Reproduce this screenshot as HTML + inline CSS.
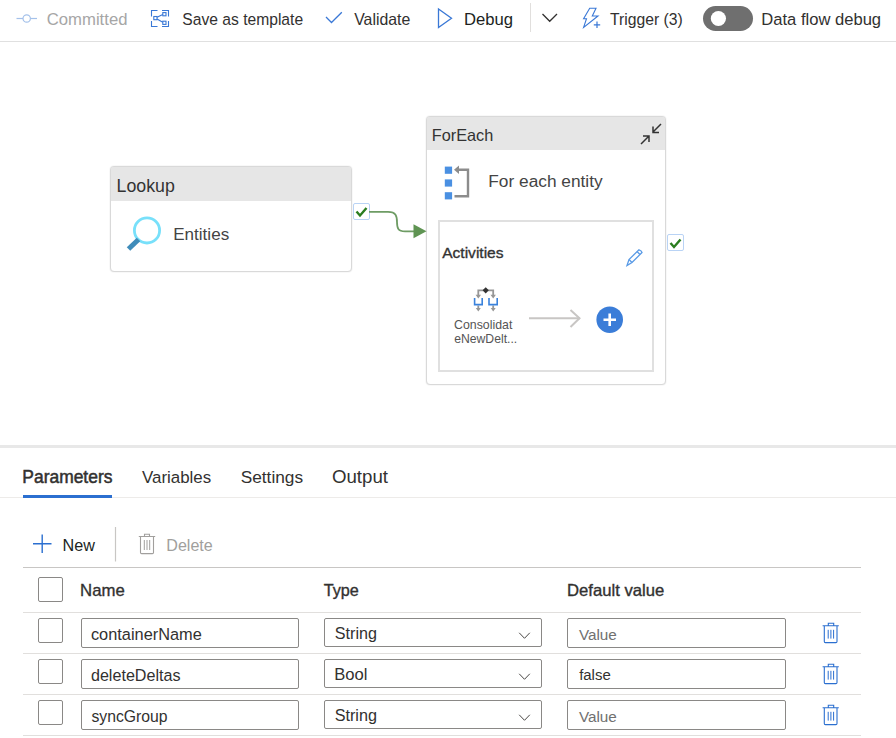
<!DOCTYPE html>
<html><head><meta charset="utf-8"><title>Pipeline</title>
<style>
*{box-sizing:border-box;margin:0;padding:0}
html,body{width:896px;height:738px;overflow:hidden;background:#fff;font-family:"Liberation Sans",sans-serif}
.t{position:absolute;white-space:pre;line-height:1}
.abs{position:absolute}
#toolbar{position:absolute;left:0;top:0;width:896px;height:42px;border-bottom:1px solid #e0e0e0}
#splitter{position:absolute;left:0;top:445px;width:896px;height:3px;background:#e8e8e8}
.node{position:absolute;background:#fff;border:1px solid #d9d9d9;border-radius:4px;box-shadow:0 0 1.5px rgba(0,0,0,0.14)}
.nhead{position:absolute;left:0;top:0;right:0;background:#e6e6e6;border-radius:2px 2px 0 0}
.cb{position:absolute;width:24px;height:24px;border:1px solid #8a8886;border-radius:2px;background:#fff}
.inp{position:absolute;border:1px solid #8a8886;border-radius:2px;background:#fff}
.rowline{position:absolute;left:23px;width:838px;height:1px;background:#e1dfdd}
.ncheck{position:absolute;width:17px;height:17px;border:1px solid #b9d3f5;border-radius:2px;background:#fff}
</style></head>
<body>
<div id="toolbar">
<svg class="abs" style="left:0;top:0" width="896" height="41">
 <g fill="none" stroke="#a4c1ea" stroke-width="1.2"><line x1="16.5" y1="18.5" x2="23" y2="18.5"/><line x1="30.5" y1="18.5" x2="37" y2="18.5"/><circle cx="26.7" cy="18.5" r="3.7"/></g>
 <g fill="none" stroke="#3a78d6" stroke-width="1.3">
  <path d="M151.5 16.5V10.5H157.5M162 10.5H168.5V16.5M168.5 21V26.5H162M157.5 26.5H151.5V21" stroke-width="1.1"/>
  <rect x="153.8" y="16.5" width="3.2" height="3.2" stroke-width="1.1"/><rect x="162.8" y="12.6" width="3.2" height="3.2" stroke-width="1.1"/><rect x="162.8" y="21.2" width="3.2" height="3.2" stroke-width="1.1"/>
  <path d="M157 17.3L162.8 14.5M157 19L162.8 22.3" stroke-width="1.1"/>
  <path d="M326 17L331.5 22.5L341.8 12.2"/>
  <path d="M438.5 9V27.5L451.5 18.2Z"/>
  <path d="M589.7 8.3H596L592.3 16H598L583.6 27.4L586.5 18.7H583.6Z" stroke-width="1.1"/>
  <path d="M597 21.6V28M593.8 24.8H600.2" stroke-width="1.2"/>
 </g>
 <line x1="530.5" y1="3" x2="530.5" y2="32" stroke="#e1dfdd" stroke-width="1"/>
 <path d="M542.5 14L549.7 21.3L557 14" fill="none" stroke="#323130" stroke-width="1.3"/>
 <rect x="703" y="6" width="50" height="25" rx="12.5" fill="#6f6f6f"/>
 <circle cx="718.4" cy="18.5" r="7.6" fill="#fff"/>
</svg>
</div>

<!-- canvas -->
<div id="canvas" class="abs" style="left:0;top:42px;width:896px;height:403px;background:#fff"></div>

<div class="node" style="left:110px;top:166px;width:242px;height:106px">
 <div class="nhead" style="height:34px"></div>
</div>
<svg class="abs" style="left:120px;top:205px" width="50" height="50">
 <circle cx="27" cy="25.4" r="12.6" fill="none" stroke="#78e0fa" stroke-width="2.8"/>
 <path d="M18.5 34.5L8.5 44" stroke="#3f8cba" stroke-width="5"/>
</svg>
<div class="ncheck" style="left:353px;top:203px"></div>

<div class="node" style="left:426px;top:116px;width:240px;height:269px">
 <div class="nhead" style="height:33px"></div>
 <div class="abs" style="left:11px;top:103px;width:216px;height:152px;border:2px solid #e0e0e0"></div>
</div>
<div class="ncheck" style="left:667px;top:234px"></div>

<svg class="abs" style="left:0;top:0" width="896" height="445">
 <!-- connector -->
 <path d="M369 211.8H388C396 211.8 397 216 397 222C397 228 398 231.3 405 231.3H415" fill="none" stroke="#6e9c64" stroke-width="1.8"/>
 <path d="M413.5 224.3L426.5 231.3L413.5 238.3Z" fill="#5f9453"/>
 <!-- checks -->
 <path d="M356.5 211.5L360 215.5L366.5 208" fill="none" stroke="#2a7d1f" stroke-width="2.4"/>
 <path d="M670.5 243L674 247L680.5 239.5" fill="none" stroke="#2a7d1f" stroke-width="2.4"/>
 <!-- collapse icon -->
 <g fill="none" stroke="#333" stroke-width="1.5">
  <path d="M661 124L653 132M653 126.5V132.5H659"/>
  <path d="M641 144L649 136M643 136H649V142"/>
 </g>
 <!-- foreach icon -->
 <g fill="#4a90e2"><rect x="444.8" y="166.6" width="7.3" height="7.2"/><rect x="444.8" y="179.4" width="7.3" height="7.2"/><rect x="444.8" y="192.2" width="7.3" height="7.2"/></g>
 <path d="M456 169.8H468V196.2H454.5" fill="none" stroke="#8c8c8c" stroke-width="2.4"/>
 <path d="M454 169.8L459 165.5V174Z" fill="#8c8c8c"/>
 <!-- pencil -->
 <g fill="none" stroke="#5a9be6" stroke-width="1.3"><path d="M627 265.5L629 259.5L639 249.8Q641.5 250.5 642 252.5L632 262.5Z"/><path d="M629 259.5L632 262.5M637 251.5L640 254.5"/></g>
 <!-- activity icon -->
 <g fill="none" stroke="#969696" stroke-width="1.8">
  <path d="M478.3 297V290.3H493.2V297"/>
  <path d="M478.3 305.5V309.5M493.2 305.5V309.5"/>
 </g>
 <g fill="#969696"><path d="M475.6 294.8L478.3 298.6L481 294.8Z"/><path d="M490.5 294.8L493.2 298.6L495.9 294.8Z"/><path d="M475.8 308L478.3 311.5L480.8 308Z"/><path d="M490.7 308L493.2 311.5L495.7 308Z"/></g>
 <path d="M485.7 287.2L488.8 290.3L485.7 293.4L482.6 290.3Z" fill="#333"/>
 <g fill="none" stroke="#3a82dc" stroke-width="1.6"><path d="M474.6 298V304.6H482.2V298"/><path d="M489 298V304.6H497.2V298"/></g>
 <!-- arrow -->
 <g fill="none" stroke="#c8c6c4" stroke-width="2"><path d="M529 318.2H580"/><path d="M570.5 310L579.5 318.2L570.5 327"/></g>
 <!-- plus button -->
 <circle cx="609.7" cy="319.7" r="13.3" fill="#3b7dd8"/>
 <path d="M603.5 319.7H616M609.7 313.5V326" stroke="#fff" stroke-width="2.6"/>
</svg>

<div id="splitter"></div>

<!-- bottom panel -->
<div class="abs" style="left:0;top:497px;width:896px;height:1px;background:#edebe9"></div>
<div class="abs" style="left:23px;top:495px;width:89px;height:3px;background:#2b6fd0"></div>

<div class="abs" style="left:23px;top:567px;width:838px;height:1px;background:#c8c6c4"></div>
<div class="rowline" style="top:612px"></div>
<div class="rowline" style="top:653px"></div>
<div class="rowline" style="top:694px"></div>
<div class="rowline" style="top:735px"></div>

<div class="cb" style="left:38px;top:577px;width:25px;height:25px"></div>
<div class="cb" style="left:38px;top:618px;width:25px;height:25px"></div>
<div class="cb" style="left:38px;top:659px;width:25px;height:25px"></div>
<div class="cb" style="left:38px;top:700px;width:25px;height:25px"></div>

<div class="inp" style="left:81px;top:618px;width:218px;height:30px"></div>
<div class="inp" style="left:324px;top:618px;width:218px;height:29px"></div>
<div class="inp" style="left:567px;top:618px;width:219px;height:30px"></div>
<div class="inp" style="left:81px;top:659px;width:218px;height:30px"></div>
<div class="inp" style="left:324px;top:659px;width:218px;height:29px"></div>
<div class="inp" style="left:567px;top:659px;width:219px;height:30px"></div>
<div class="inp" style="left:81px;top:700px;width:218px;height:30px"></div>
<div class="inp" style="left:324px;top:700px;width:218px;height:29px"></div>
<div class="inp" style="left:567px;top:700px;width:219px;height:30px"></div>

<svg class="abs" style="left:0;top:498px" width="896" height="240">
 <g transform="translate(0,-498)">
 <path d="M33 543.7H51.5M42.2 534.5V553" stroke="#2b6fd0" stroke-width="1.4" fill="none"/>
 <line x1="115.5" y1="527" x2="115.5" y2="561.5" stroke="#c8c6c4" stroke-width="1.2"/>
 <g fill="none" stroke="#a19f9d" stroke-width="1.1"><path d="M138.8 536.5H155.2M144.5 536.5V534.2H149.5V536.5M140.5 536.5V552.5Q140.5 553.6 141.6 553.6H152.4Q153.5 553.6 153.5 552.5V536.5"/><path d="M144.3 540V550M147 540V550M149.7 540V550" stroke-width="1"/></g>
 <g fill="none" stroke="#2b6fd0" stroke-width="1.1">
  <path d="M822.6 625.7H838.8M828.3 625.7V623.3H833.7V625.7M824.3 625.7V641.5Q824.3 642.6 825.4 642.6H835.9Q837 642.6 837 641.5V625.7"/>
  <path d="M828.2 629.8V638.6M830.9 629.8V638.6M833.6 629.8V638.6" stroke-width="1"/>
  <path d="M822.6 666.7H838.8M828.3 666.7V664.3H833.7V666.7M824.3 666.7V682.5Q824.3 683.6 825.4 683.6H835.9Q837 683.6 837 682.5V666.7"/>
  <path d="M828.2 670.8V679.6M830.9 670.8V679.6M833.6 670.8V679.6" stroke-width="1"/>
  <path d="M822.6 707.7H838.8M828.3 707.7V705.3H833.7V707.7M824.3 707.7V723.5Q824.3 724.6 825.4 724.6H835.9Q837 724.6 837 723.5V707.7"/>
  <path d="M828.2 711.8V720.6M830.9 711.8V720.6M833.6 711.8V720.6" stroke-width="1"/>
 </g>
 <g fill="none" stroke="#484644" stroke-width="1">
  <path d="M519.2 632.8L524.5 638.3L529.8 632.8"/>
  <path d="M519.2 673.8L524.5 679.3L529.8 673.8"/>
  <path d="M519.2 714.8L524.5 720.3L529.8 714.8"/>
 </g>
 </g>
</svg>
<div class="t" style="left:46.77px;top:12.10px;font-size:16.69px;font-weight:400;color:#a6a6a6">Committed</div>
<div class="t" style="left:182.27px;top:12.11px;font-size:15.65px;font-weight:400;color:#323130">Save as template</div>
<div class="t" style="left:354.20px;top:12.11px;font-size:15.87px;font-weight:400;color:#323130">Validate</div>
<div class="t" style="left:464.07px;top:12.11px;font-size:16.65px;font-weight:400;color:#201f1e">Debug</div>
<div class="t" style="left:609.99px;top:12.12px;font-size:15.73px;font-weight:400;color:#323130">Trigger (3)</div>
<div class="t" style="left:761.27px;top:12.10px;font-size:16.58px;font-weight:400;color:#323130">Data flow debug</div>
<div class="t" style="left:116.58px;top:177.50px;font-size:17.76px;font-weight:400;color:#333333">Lookup</div>
<div class="t" style="left:173.23px;top:226.41px;font-size:17.07px;font-weight:400;color:#444444">Entities</div>
<div class="t" style="left:431.80px;top:126.91px;font-size:16.28px;font-weight:400;color:#333333">ForEach</div>
<div class="t" style="left:488.32px;top:173.31px;font-size:17.29px;font-weight:400;color:#444444">For each entity</div>
<div class="t" style="left:442.20px;top:245.31px;font-size:15.55px;font-weight:400;color:#333333;-webkit-text-stroke:0.35px #333333">Activities</div>
<div class="t" style="left:454.08px;top:318.61px;font-size:12.34px;font-weight:400;color:#555555">Consolidat</div>
<div class="t" style="left:454.21px;top:333.41px;font-size:12.20px;font-weight:400;color:#555555">eNewDelt...</div>
<div class="t" style="left:22.36px;top:469.10px;font-size:17.43px;font-weight:400;color:#323130;-webkit-text-stroke:0.5px #323130">Parameters</div>
<div class="t" style="left:142.00px;top:470.11px;font-size:16.90px;font-weight:400;color:#323130">Variables</div>
<div class="t" style="left:240.71px;top:469.11px;font-size:17.27px;font-weight:400;color:#323130">Settings</div>
<div class="t" style="left:331.95px;top:468.11px;font-size:18.69px;font-weight:400;color:#323130">Output</div>
<div class="t" style="left:62.51px;top:536.92px;font-size:16.18px;font-weight:400;color:#201f1e">New</div>
<div class="t" style="left:166.31px;top:536.91px;font-size:16.08px;font-weight:400;color:#a19f9d">Delete</div>
<div class="t" style="left:80.06px;top:583.00px;font-size:16.74px;font-weight:400;color:#323130;-webkit-text-stroke:0.35px #323130">Name</div>
<div class="t" style="left:323.68px;top:582.00px;font-size:16.19px;font-weight:400;color:#323130;-webkit-text-stroke:0.35px #323130">Type</div>
<div class="t" style="left:566.97px;top:583.01px;font-size:16.68px;font-weight:400;color:#323130;-webkit-text-stroke:0.35px #323130">Default value</div>
<div class="t" style="left:90.95px;top:625.81px;font-size:16.35px;font-weight:400;color:#323130">containerName</div>
<div class="t" style="left:334.85px;top:624.81px;font-size:16.14px;font-weight:400;color:#323130">String</div>
<div class="t" style="left:578.90px;top:626.70px;font-size:15.28px;font-weight:400;color:#707070">Value</div>
<div class="t" style="left:90.96px;top:666.81px;font-size:16.12px;font-weight:400;color:#323130">deleteDeltas</div>
<div class="t" style="left:334.27px;top:666.62px;font-size:16.62px;font-weight:400;color:#323130">Bool</div>
<div class="t" style="left:579.15px;top:668.40px;font-size:14.96px;font-weight:400;color:#323130">false</div>
<div class="t" style="left:91.48px;top:708.81px;font-size:15.76px;font-weight:400;color:#323130">syncGroup</div>
<div class="t" style="left:334.65px;top:706.81px;font-size:16.22px;font-weight:400;color:#323130">String</div>
<div class="t" style="left:578.90px;top:708.70px;font-size:15.28px;font-weight:400;color:#707070">Value</div>
</body></html>
